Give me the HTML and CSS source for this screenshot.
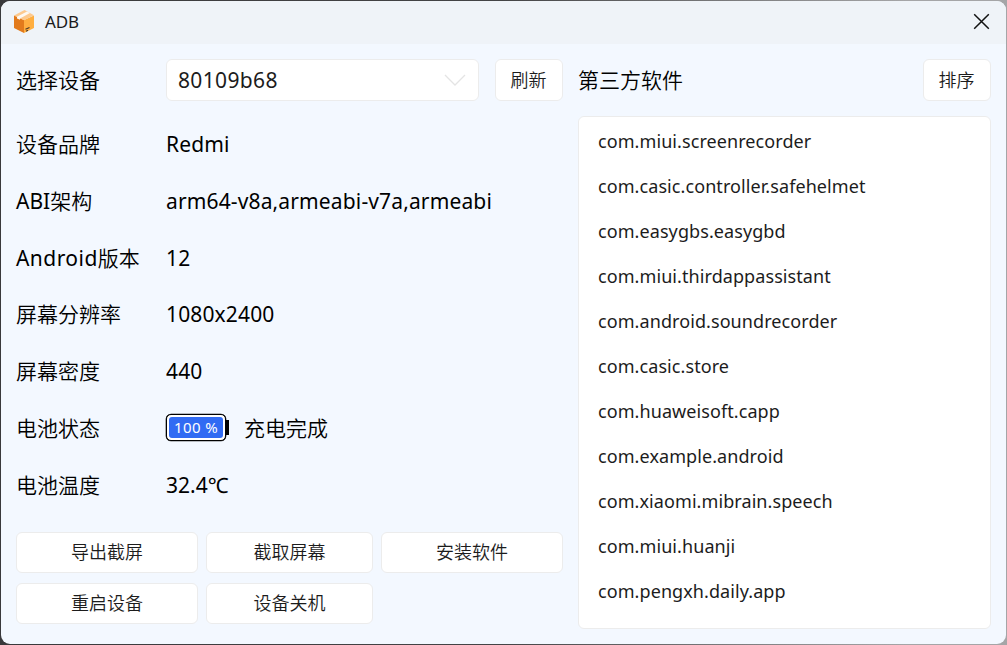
FILE: index.html
```html
<!DOCTYPE html>
<html lang="zh-CN">
<head>
<meta charset="utf-8">
<title>ADB</title>
<link rel="stylesheet" href="styles.css">
</head>
<body>
<div class="window">
  <header class="titlebar">
    <svg class="logo" width="22" height="25" viewBox="0 0 22 25">
      <path d="M1 6.5 11 11v13L1 19z" fill="#e27a1c"/>
      <path d="M21 6.5 11 11v13l10-5z" fill="#ffae40"/>
      <path d="M1 6.5 11.5 1 21 6.2 11 11.3z" fill="#fdc98d"/>
      <path d="M4 7.8 14 2.5l3 1.6L7 9.5v1.3L4 9.5z" fill="#fff8f0"/>
      <path d="M12.5 20.2l4-1.8M13 22.2l2-1" stroke="#4a3929" stroke-width="1.1"/>
    </svg>
    <span class="title">ADB</span>
    <svg class="close" width="17" height="17" viewBox="0 0 17 17"><path d="M1.2 1.2l14.6 14.6M15.8 1.2 1.2 15.8" stroke="#111" stroke-width="1.5"/></svg>
  </header>
  <main class="content">
    <section class="device">
      <div class="picker">
        <span class="label">选择设备</span>
        <div class="select"><span class="serial">80109b68</span>
          <svg width="22" height="12" viewBox="0 0 22 12"><path d="M1 1l10 10L21 1" fill="none" stroke="#e4e4e4" stroke-width="1.3"/></svg>
        </div>
        <button class="btn small">刷新</button>
      </div>
      <div class="info">
        <span class="label">设备品牌</span><span class="value latin">Redmi</span>
        <span class="label">ABI架构</span><span class="value latin">arm64-v8a,armeabi-v7a,armeabi</span>
        <span class="label"><span class="android">Android</span>版本</span><span class="value latin">12</span>
        <span class="label">屏幕分辨率</span><span class="value latin">1080x2400</span>
        <span class="label">屏幕密度</span><span class="value latin">440</span>
        <span class="label">电池状态</span>
        <span class="value battery-row"><span class="battery"><span class="level">100 %</span></span><span class="cap"></span><span class="state">充电完成</span></span>
        <span class="label">电池温度</span><span class="value">32.4℃</span>
      </div>
      <div class="actions">
        <button class="btn">导出截屏</button>
        <button class="btn">截取屏幕</button>
        <button class="btn">安装软件</button>
        <button class="btn">重启设备</button>
        <button class="btn">设备关机</button>
      </div>
    </section>
    <section class="apps">
      <div class="apps-head"><span class="label">第三方软件</span><button class="btn small">排序</button></div>
      <ul class="list">
        <li>com.miui.screenrecorder</li>
        <li>com.casic.controller.safehelmet</li>
        <li>com.easygbs.easygbd</li>
        <li>com.miui.thirdappassistant</li>
        <li>com.android.soundrecorder</li>
        <li>com.casic.store</li>
        <li>com.huaweisoft.capp</li>
        <li>com.example.android</li>
        <li>com.xiaomi.mibrain.speech</li>
        <li>com.miui.huanji</li>
        <li>com.pengxh.daily.app</li>
      </ul>
    </section>
  </main>
</div>
</body>
</html>
```

FILE: styles.css
```css
* { box-sizing: border-box; }
body {
  margin: 0;
  width: 1007px;
  height: 645px;
  padding: 1px;
  overflow: hidden;
  background: linear-gradient(90deg, #39393b 0%, #444446 50%, #a5a5a7 90%);
  font-family: "Noto Sans", "Noto Sans CJK SC DemiLight", "Noto Sans CJK SC Light", "Noto Sans CJK SC", sans-serif;
  font-size: 21px;
  color: #000;
}
.window {
  width: 1005px;
  height: 643px;
  border-radius: 9px;
  background: #f3f8ff;
  overflow: hidden;
}
.titlebar {
  height: 43px;
  padding: 0 16px 2px 12px;
  display: flex;
  align-items: center;
  background: #eff3f8;
}
.title { margin-left: 10px; font-size: 17px; letter-spacing: -0.1px; line-height: 24px; color: #1a1a1a; }
.close { margin-left: auto; }
.content {
  display: grid;
  grid-template-columns: 547px 413px;
  column-gap: 15px;
  padding: 15px 0 0 15px;
}
.label, .value { line-height: 30px; white-space: nowrap; }
.latin { letter-spacing: 0.14px; }
.android { letter-spacing: 0.45px; }
.serial { letter-spacing: 0.35px; }
.picker { display: flex; align-items: center; height: 42px; }
.picker .label { width: 150px; }
.select {
  width: 313px;
  height: 42px;
  margin-right: 16px;
  padding: 0 12px 0 11px;
  display: flex;
  align-items: center;
  justify-content: space-between;
  border: 1px solid #ececec;
  border-radius: 6px;
  background: #fff;
  color: #1c1c1c;
}
.btn {
  height: 42px;
  padding: 0 0 2px 0;
  border: 1px solid #ececec;
  border-radius: 6px;
  background: #fff;
  color: #1c1c1c;
  font-family: inherit;
  font-size: 18px;
}
.small { width: 68px; padding-right: 1px; }
.info {
  display: grid;
  grid-template-columns: 150px 1fr;
  grid-template-rows: 57px 57px 57px 56px 57px 57px 58px;
  align-items: center;
  margin-top: 14px;
}
.battery-row { display: flex; align-items: center; }
.battery {
  width: 60px;
  height: 27px;
  padding: 2px;
  border: 1px solid #000;
  border-radius: 5px;
  background: #fff;
  box-shadow: 0 0 0 0.3px #000;
}
.level {
  display: block;
  height: 21px;
  border-radius: 3px;
  background: #316bf3;
  color: #fff;
  font-size: 15px;
  line-height: 21px;
  letter-spacing: 0.4px;
  text-align: center;
}
.cap { width: 3px; height: 15px; background: #000; }
.state { margin-left: 15px; }
.actions {
  display: grid;
  grid-template-columns: 182px 167px 182px;
  gap: 10px 8px;
  margin-top: 18px;
}
.actions .btn { height: 41px; padding-bottom: 3px; }
.apps-head { display: flex; align-items: center; justify-content: space-between; height: 42px; }
.list {
  height: 513px;
  margin: 15px 0 0;
  padding: 2px 19px;
  list-style: none;
  border: 1px solid #ececec;
  border-radius: 6px;
  background: #fff;
  color: #1c1c1c;
  font-size: 18px;
  letter-spacing: 0.08px;
  line-height: 45px;
}
```
